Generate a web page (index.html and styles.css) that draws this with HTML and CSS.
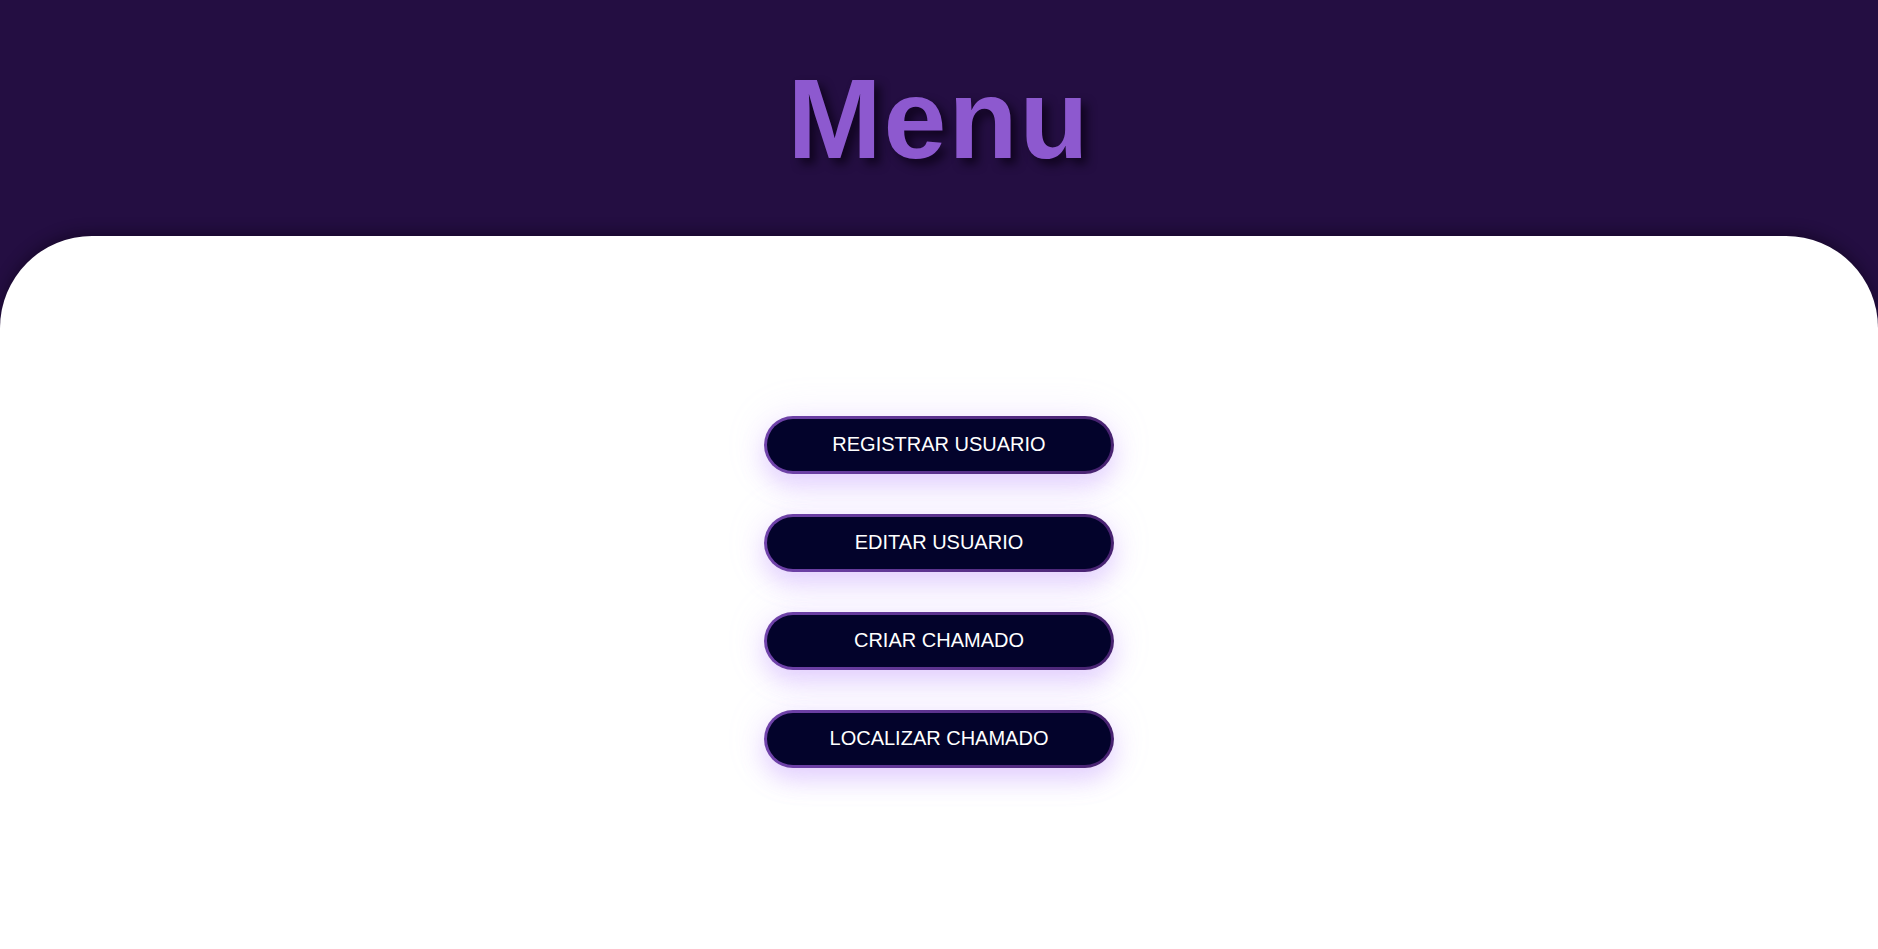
FILE: index.html
```html
<!DOCTYPE html>
<html lang="pt-BR">
<head>
<meta charset="utf-8">
<title>Menu</title>
<link rel="stylesheet" href="styles.css">
</head>
<body>
<div class="page">
  <header class="top">
    <h1 class="title">Menu</h1>
  </header>
  <main class="panel">
    <nav class="menu">
      <button class="menu-btn">REGISTRAR USUARIO</button>
      <button class="menu-btn">EDITAR USUARIO</button>
      <button class="menu-btn">CRIAR CHAMADO</button>
      <button class="menu-btn">LOCALIZAR CHAMADO</button>
    </nav>
  </main>
</div>
</body>
</html>
```

FILE: styles.css
```css
html, body {
  margin: 0;
  padding: 0;
  height: 100%;
}
body {
  background: #240e42;
  font-family: "Liberation Sans", Arial, sans-serif;
  overflow: hidden;
}
.page {
  height: 100vh;
  display: flex;
  flex-direction: column;
}
.top {
  height: 236px;
  flex: 0 0 236px;
  display: flex;
  justify-content: center;
  background: #240e42;
}
.title {
  margin: 0;
  padding-top: 55px;
  font-size: 113px;
  line-height: 128px;
  font-weight: 700;
  letter-spacing: 2px;
  color: #8d59cf;
  text-shadow: 6px 6px 10px rgba(10, 0, 20, 0.75);
}
.panel {
  flex: 1;
  background: #ffffff;
  border-radius: 92px 92px 0 0;
  box-shadow: 0 -4px 14px rgba(10, 0, 20, 0.45);
  display: flex;
  align-items: center;
  justify-content: center;
}
.menu {
  display: flex;
  flex-direction: column;
  gap: 40px;
  margin-top: -2px;
}
.menu-btn {
  width: 350px;
  height: 58px;
  border-radius: 29px;
  border: 3px solid transparent;
  background:
    linear-gradient(#03032b, #03032b) padding-box,
    linear-gradient(to right, #7043ab, #472270) border-box;
  color: #ffffff;
  font-family: "Liberation Sans", Arial, sans-serif;
  font-size: 20px;
  padding: 0;
  box-shadow: 0 12px 24px rgba(170, 110, 250, 0.28), 0 0 40px rgba(200, 160, 255, 0.18);
  cursor: pointer;
}
```
